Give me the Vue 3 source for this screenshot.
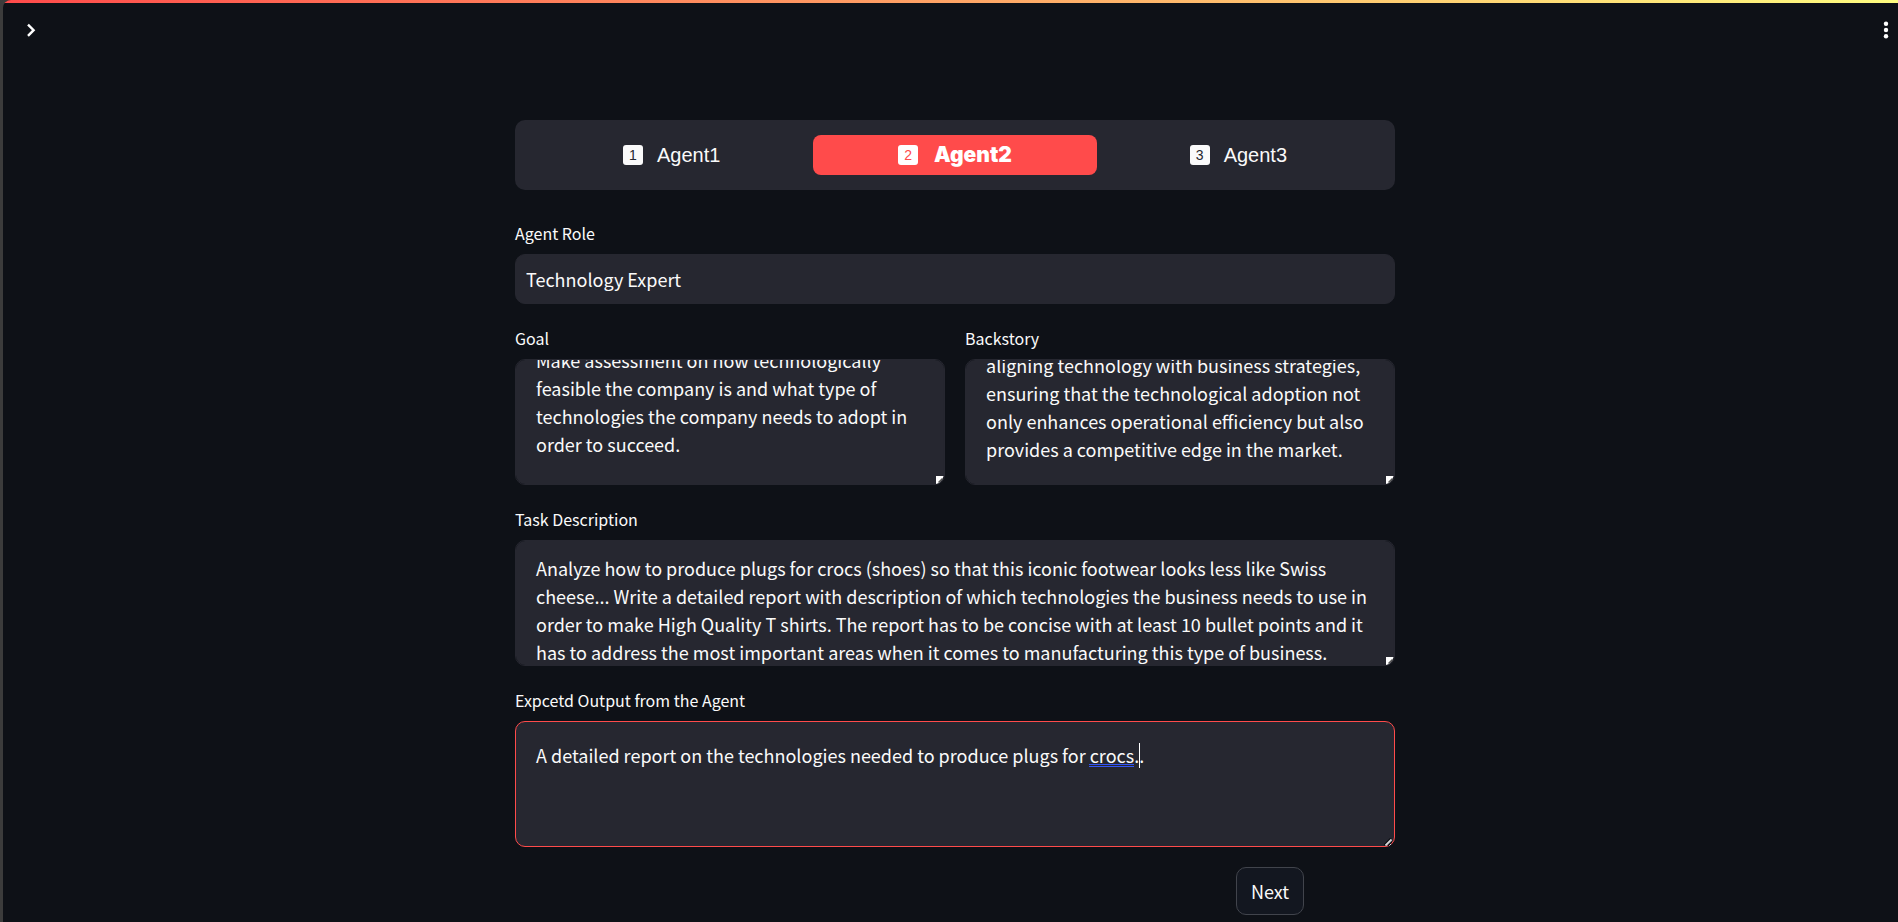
<script setup>
import { onMounted, ref } from 'vue'

const tabs = ['Agent1', 'Agent2', 'Agent3']
const active = ref(1)

const role = ref('Technology Expert')
const goal = ref(
  'Make assessment on how technologically feasible the company is and what type of technologies the company needs to adopt in order to succeed.\n'
)
const backstory = ref(
  'aligning technology with business strategies, ensuring that the technological adoption not only enhances operational efficiency but also provides a competitive edge in the market.'
)
const task = ref(
  'Analyze how to produce plugs for crocs (shoes) so that this iconic footwear looks less like Swiss cheese... Write a detailed report with description of which technologies the business needs to use in order to make High Quality T shirts. The report has to be concise with at least 10 bullet points and it has to address the most important areas when it comes to manufacturing this type of business.'
)
const output = ref('A detailed report on the technologies needed to produce plugs for crocs..')

const goalBox = ref(null)
const backstoryBox = ref(null)
const taskBox = ref(null)

onMounted(() => {
  goalBox.value.scrollTop = 33
  backstoryBox.value.scrollTop = 28
  taskBox.value.scrollTop = 6
})
</script>

<template>
  <div class="frame">
    <div class="app">
      <div class="decoration"></div>
      <header class="toolbar">
        <button type="button" class="icon-button" aria-label="Open sidebar">
          <svg width="20" height="20" viewBox="0 0 20 20">
            <path d="M7 4.6 L12.6 10.2 L7 15.8" fill="none" stroke="#fff" stroke-width="2.4" />
          </svg>
        </button>
        <button type="button" class="icon-button" aria-label="Main menu">
          <svg width="20" height="20" viewBox="0 0 20 20" fill="#fff">
            <circle cx="10" cy="3.8" r="2.2" />
            <circle cx="10" cy="10" r="2.2" />
            <circle cx="10" cy="16.2" r="2.2" />
          </svg>
        </button>
      </header>

      <main class="content">
        <nav class="tabs" aria-label="Agents">
          <button
            v-for="(tab, i) in tabs"
            :key="tab"
            type="button"
            class="tab"
            :class="{ active: i === active }"
            @click="active = i"
          >
            <span class="number">{{ i + 1 }}</span>
            <span>{{ tab }}</span>
          </button>
        </nav>

        <div class="field">
          <label for="role">Agent Role</label>
          <input id="role" v-model="role" type="text" />
        </div>

        <div class="pair">
          <div class="field">
            <label for="goal">Goal</label>
            <div class="box">
              <textarea id="goal" ref="goalBox" v-model="goal" spellcheck="false"></textarea>
              <svg class="grip" width="8" height="8" viewBox="0 0 8 8">
                <path d="M0 0 H7.5 L6.5 3 L3 7 L0 8 Z" fill="#fff" />
                <path d="M2.5 6.5 L6.5 2.5" stroke="#555" stroke-width="1.4" />
              </svg>
            </div>
          </div>
          <div class="field">
            <label for="backstory">Backstory</label>
            <div class="box">
              <textarea id="backstory" ref="backstoryBox" v-model="backstory" spellcheck="false"></textarea>
              <svg class="grip" width="8" height="8" viewBox="0 0 8 8">
                <path d="M0 0 H7.5 L6.5 3 L3 7 L0 8 Z" fill="#fff" />
                <path d="M2.5 6.5 L6.5 2.5" stroke="#555" stroke-width="1.4" />
              </svg>
            </div>
          </div>
        </div>

        <div class="field">
          <label for="task">Task Description</label>
          <div class="box">
            <textarea id="task" ref="taskBox" v-model="task" spellcheck="false"></textarea>
            <svg class="grip" width="8" height="8" viewBox="0 0 8 8">
              <path d="M0 0 H7.5 L6.5 3 L3 7 L0 8 Z" fill="#fff" />
              <path d="M2.5 6.5 L6.5 2.5" stroke="#555" stroke-width="1.4" />
            </svg>
          </div>
        </div>

        <div class="field">
          <label for="output">Expcetd Output from the Agent</label>
          <div class="box">
            <textarea id="output" v-model="output" class="focused" spellcheck="false"></textarea>
            <span class="grammar-mark"></span>
            <span class="caret"></span>
            <svg class="grip wide" width="10" height="8" viewBox="0 0 10 8">
              <path d="M0 7 L7 0" stroke="#0a0c10" stroke-width="1.4" />
              <path d="M1.5 7.5 L7.5 1.5" stroke="#d5d5d8" stroke-width="1.8" />
              <path d="M4 8 L8 4" stroke="#0a0c10" stroke-width="1" />
              <path d="M5.5 7.5 L7 6" stroke="#d5d5d8" stroke-width="1" />
            </svg>
          </div>
        </div>

        <div class="actions">
          <button type="button" class="next">Next</button>
        </div>
      </main>
    </div>
  </div>
</template>

<style>
body {
  background: #3c3c3c;
}
</style>

<style scoped>
.frame {
  box-sizing: border-box;
  min-height: 100vh;
  padding-left: 3px;
  display: flex;
  background: #3c3c3c;
  font-family: "Noto Sans CJK SC", "Noto Sans", sans-serif;
  color: #fafafa;
}

.app {
  flex: 1;
  display: flex;
  flex-direction: column;
  background: #0e1117;
  border-top-left-radius: 8px;
  overflow: hidden;
}

.decoration {
  height: 3px;
  background: linear-gradient(90deg, #ff4b4b, #fffd80);
}

.toolbar {
  display: flex;
  justify-content: space-between;
  align-items: center;
  height: 54px;
  padding: 0 2px 0 18px;
}

.icon-button {
  display: flex;
  padding: 0;
  border: 0;
  background: none;
  cursor: pointer;
}

.content {
  box-sizing: border-box;
  width: 100%;
  max-width: 889px;
  margin: 0 auto;
  padding-top: 63px;
  padding-left: 9px;
}

.tabs {
  display: grid;
  grid-template-columns: repeat(3, 1fr);
  padding: 15px;
  margin-bottom: 29px;
  border-radius: 10px;
  background: #262730;
}

.tab {
  display: flex;
  align-items: center;
  justify-content: center;
  gap: 14px;
  height: 40px;
  padding: 0;
  border: 0;
  border-radius: 8px;
  background: none;
  color: #fafafa;
  font-family: "Liberation Sans", Arial, sans-serif;
  font-size: 20px;
  line-height: 24px;
  cursor: pointer;
}

.tab.active {
  gap: 16px;
  background: #ff4b4b;
  color: #fff;
  font-family: Inter, "Liberation Sans", sans-serif;
  font-size: 21px;
  font-weight: 900;
}

.number {
  width: 20px;
  height: 20px;
  border-radius: 3px;
  background: #fafafa;
  color: #262730;
  font-family: "Liberation Sans", Arial, sans-serif;
  font-size: 14px;
  font-weight: 400;
  line-height: 20px;
  text-align: center;
}

.tab.active .number {
  background: #fff;
  color: #ff4b4b;
}

.field {
  display: flex;
  flex-direction: column;
  gap: 7px;
  margin-bottom: 20px;
}

.pair {
  display: grid;
  grid-template-columns: 1fr 1fr;
  gap: 20px;
}

label {
  font-size: 16px;
  line-height: 28px;
}

input,
textarea {
  display: block;
  box-sizing: border-box;
  width: 100%;
  margin: 0;
  border: 1px solid #262730;
  border-radius: 10px;
  outline: 0;
  background: #262730;
  color: #fafafa;
  font-family: inherit;
  font-size: 18px;
  line-height: 28px;
}

input {
  height: 50px;
  padding: 0 10px;
}

textarea {
  height: 126px;
  padding: 19px 20px 21px;
  resize: none;
  scrollbar-width: none;
}

textarea.focused {
  border-color: #ff4b4b;
}

.box {
  position: relative;
}

.grip {
  position: absolute;
  right: 1px;
  bottom: 1px;
}

.grammar-mark {
  position: absolute;
  left: 574px;
  top: 43px;
  width: 45px;
  height: 3px;
  box-sizing: border-box;
  border-top: 1px solid #3355f5;
  border-bottom: 1px solid #3355f5;
}

.caret {
  position: absolute;
  left: 624px;
  top: 22px;
  width: 1px;
  height: 25px;
  background: #fff;
}

.actions {
  display: flex;
  justify-content: flex-end;
  padding-right: 91px;
  padding-bottom: 7px;
}

.next {
  height: 48px;
  padding: 0 14px;
  border: 1px solid #41444c;
  border-radius: 10px;
  background: #131720;
  color: #fafafa;
  font-family: inherit;
  font-size: 18px;
  line-height: 28px;
  cursor: pointer;
}
</style>
